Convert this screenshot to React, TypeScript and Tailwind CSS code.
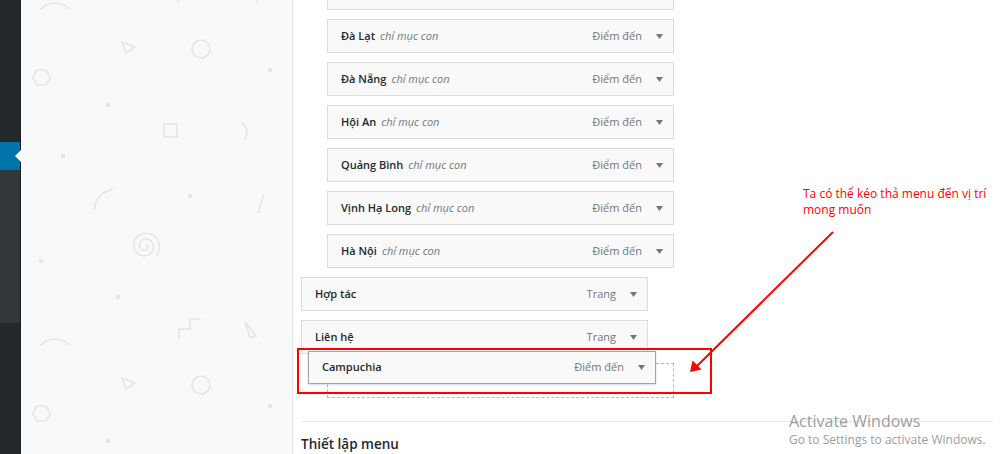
import React from "react";

type Item = { title?: string; sub?: boolean; type: string };

const items: Item[] = [
  { sub: true, type: "" },
  { title: "Đà Lạt", sub: true, type: "Điểm đến" },
  { title: "Đà Nẵng", sub: true, type: "Điểm đến" },
  { title: "Hội An", sub: true, type: "Điểm đến" },
  { title: "Quảng Bình", sub: true, type: "Điểm đến" },
  { title: "Vịnh Hạ Long", sub: true, type: "Điểm đến" },
  { title: "Hà Nội", sub: true, type: "Điểm đến" },
  { title: "Hợp tác", type: "Trang" },
  { title: "Liên hệ", type: "Trang" },
];

const Caret = () => (
  <svg width="7" height="5" viewBox="0 0 7 5" className="shrink-0">
    <path d="M0 0h7L3.5 5z" fill="#72777c" />
  </svg>
);

const MenuItem = ({ item }: { item: Item }) => (
  <div
    className={`flex h-[34px] w-[347px] items-center border border-[#dcdcde] bg-[#f9f9f9] pl-[13px] pr-[10px] text-[11px] ${
      item.sub ? "ml-[26px]" : ""
    }`}
  >
    {item.title && <span className="font-semibold text-[#23282d]">{item.title}</span>}
    {item.title && item.sub && <span className="ml-[5px] italic text-[#72777c]">chỉ mục con</span>}
    <div className="flex-1" />
    {item.type && (
      <>
        <span className="text-[#72777c]">{item.type}</span>
        <span className="ml-[14px]">
          <Caret />
        </span>
      </>
    )}
  </div>
);

// spiral points, computed once
const spiral = (() => {
  const pts: string[] = [];
  const turns = 2.4;
  const max = turns * Math.PI * 2;
  for (let t = 0.6; t <= max; t += 0.15) {
    const r = 1 + (14 * t) / max;
    const a = t - max + Math.PI * 0.25;
    pts.push(`${(124 + r * Math.cos(a)).toFixed(1)},${(246 + r * Math.sin(a)).toFixed(1)}`);
  }
  return pts.join(" ");
})();

const Pattern = () => {
  const stroke = "#e3e5e8";
  const block = (dy: number) => (
    <g key={dy} transform={`translate(0 ${dy})`} fill="none" stroke={stroke} strokeWidth="1.6">
      <path d="M19 9 Q34 -3 49 9" />
      <path d="M101 42 L114 47 L105 53 Z" />
      <circle cx="180" cy="49" r="9" />
      <path d="M16 70 h9 l4.5 7.5 l-4.5 7.5 h-9 l-4.5 -7.5 z" />
      <rect x="143" y="124" width="13" height="13" />
      <path d="M221 122 Q229 131 224 140" />
      <path d="M73 210 Q75 193 92 189" />
      <path d="M237 213 L243 194" />
      {dy === 0 && <polyline points={spiral} />}
      <path d="M158 339 v-10 h11 v-10 h11" />
      <path d="M224 322 L229 337 L235 336 Z" />
      <g fill={stroke} stroke="none">
        <rect x="247" y="68" width="4" height="4" />
        <rect x="85" y="103" width="4" height="4" />
        <rect x="40" y="154" width="4" height="4" />
        <rect x="167" y="194" width="4" height="4" />
        <rect x="18" y="259" width="4" height="4" />
        <rect x="95" y="295" width="4" height="4" />
      </g>
    </g>
  );
  return (
    <svg width="271" height="454" className="block">
      <path d="M157 0 v3" stroke={stroke} strokeWidth="1.6" />
      <path d="M235 0 l2 3" stroke={stroke} strokeWidth="1.6" />
      {block(0)}
      {block(336)}
    </svg>
  );
};

export default function App() {
  return (
    <div className="relative flex h-[454px] w-[1000px] overflow-hidden bg-white font-['Open_Sans',sans-serif]">
      <aside className="flex w-[21px] shrink-0 flex-col border-r border-[#1d2125]">
        <div className="h-[142px] bg-[#23282d]" />
        <div className="relative h-[28px] bg-[#0073aa]">
          <div className="absolute right-[-1px] top-[8px] h-0 w-0 border-y-[6px] border-r-[6px] border-y-transparent border-r-[#f8f9fa]" />
        </div>
        <div className="h-[153px] bg-[#32373c]" />
        <div className="flex-1 bg-[#23282d]" />
      </aside>

      <div className="w-[272px] shrink-0 border-r border-[#e5e5e5] bg-[#f8f9fa]">
        <Pattern />
      </div>

      <main className="flex-1 pl-[8px]">
        <div className="-mt-[24px] flex flex-col gap-[9px]">
          {items.map((it, i) => (
            <MenuItem key={i} item={it} />
          ))}
          <div className="ml-[26px] h-[35px] w-[347px] border border-dashed border-[#b4b9be]" />
        </div>
        <div className="mr-[7px] mt-[23px] border-t border-[#e5e5e5]" />
        <h3 className="mt-[12px] text-[13.5px] font-semibold text-[#23282d]">Thiết lập menu</h3>
      </main>

      {/* item being dragged */}
      <div className="absolute left-[308px] top-[351px] flex h-[33px] w-[348px] items-center border border-[#a0a5aa] bg-[#f9f9f9] pl-[13px] pr-[10px] text-[11px] shadow-[0_1px_2px_rgba(0,0,0,0.15)]">
        <span className="font-semibold text-[#23282d]">Campuchia</span>
        <div className="flex-1" />
        <span className="text-[#72777c]">Điểm đến</span>
        <span className="ml-[14px]">
          <Caret />
        </span>
      </div>

      {/* annotation */}
      <div className="absolute left-[297px] top-[348px] h-[46px] w-[415px] border-2 border-[#ff0000]" />
      <svg className="absolute left-0 top-0" width="1000" height="454">
        <line x1="833" y1="232" x2="696" y2="367" stroke="#ff0000" strokeWidth="2" />
        <path d="M691 371 L693 362 L700 369 Z" fill="#ff0000" stroke="#ff0000" strokeWidth="1.5" />
      </svg>
      <p className="absolute left-[803px] top-[186px] w-[190px] text-[12px] leading-[16px] text-[#ff0000]">
        Ta có thể kéo thả menu đến vị trí mong muốn
      </p>

      {/* windows watermark */}
      <div className="absolute left-[789px] top-[411px] text-[#9d9d9d]">
        <p className="text-[16px] leading-[21px]">Activate Windows</p>
        <p className="text-[12px] leading-[16px]">Go to Settings to activate Windows.</p>
      </div>
    </div>
  );
}
